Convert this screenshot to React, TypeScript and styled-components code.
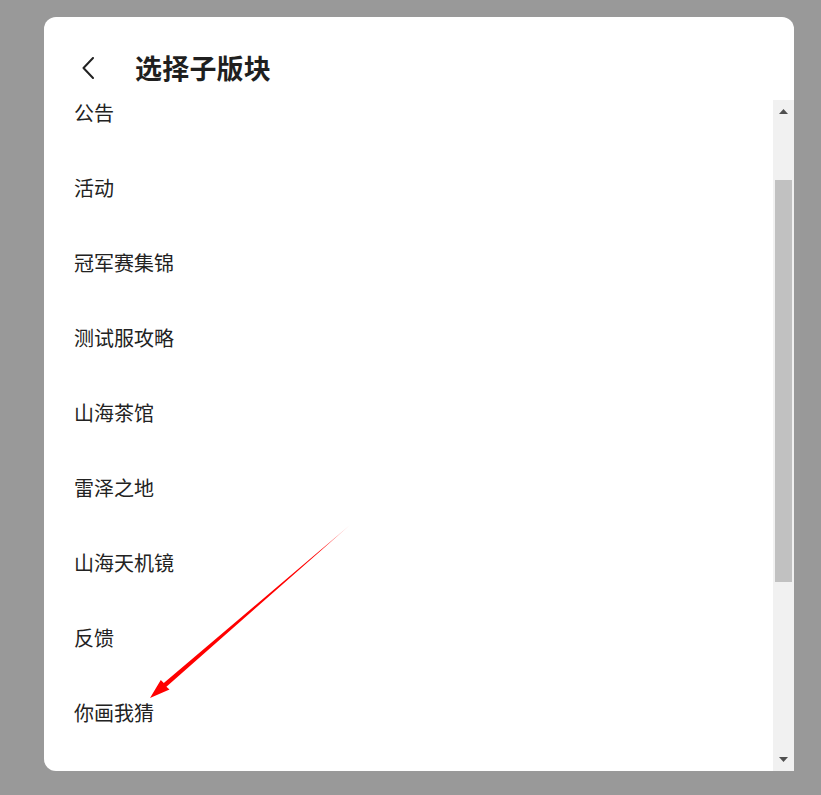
import React from "react";
import styled, { createGlobalStyle } from "styled-components";

const GlobalStyle = createGlobalStyle`
  html, body {
    margin: 0;
    padding: 0;
    background: #999999;
  }
  body {
    font-family: "Noto Sans CJK SC", "Noto Sans", sans-serif;
  }
`;

const Page = styled.div`
  position: relative;
  width: 821px;
  height: 795px;
  box-sizing: border-box;
  padding: 17px 27px 24px 44px;
  background: #999999;
  overflow: hidden;
`;

const Modal = styled.div`
  width: 750px;
  height: 754px;
  background: #ffffff;
  border-radius: 12px 12px 0 12px;
  overflow: hidden;
  display: flex;
  flex-direction: column;
`;

const Header = styled.div`
  height: 83px;
  box-sizing: border-box;
  padding: 33px 0 0 38px;
  display: flex;
  align-items: flex-start;
  gap: 41px;
  flex-shrink: 0;
`;

const BackButton = styled.div`
  width: 12px;
  height: 36px;
  display: flex;
  align-items: center;
  color: #222222;
`;

const Title = styled.h1`
  margin: 0;
  font-size: 27px;
  line-height: 36px;
  font-weight: 700;
  color: #1f1f1f;
  letter-spacing: 0.2px;
`;

const Body = styled.div`
  flex: 1;
  display: flex;
  min-height: 0;
`;

const ListViewport = styled.div`
  flex: 1;
  min-width: 0;
`;

const List = styled.ul`
  list-style: none;
  margin: 0;
  padding: 0;
`;

const Item = styled.li`
  padding: 25.5px 0 25.5px 30px;
  font-size: 20px;
  line-height: 24px;
  color: #222222;

  &:first-child {
    padding-top: 0.5px;
  }
`;

const ScrollBar = styled.div`
  width: 21px;
  background: #f1f1f1;
  display: flex;
  flex-direction: column;
  flex-shrink: 0;
`;

const ArrowButton = styled.div`
  height: 23px;
  display: flex;
  align-items: center;
  justify-content: center;
  flex-shrink: 0;
`;

const Track = styled.div`
  flex: 1;
  padding-top: 57px;
`;

const Thumb = styled.div`
  height: 402px;
  margin: 0 2px;
  background: #c1c1c1;
`;

const Annotation = styled.svg`
  position: absolute;
  left: 0;
  top: 0;
  pointer-events: none;
`;

const items = [
  "公告",
  "活动",
  "冠军赛集锦",
  "测试服攻略",
  "山海茶馆",
  "雷泽之地",
  "山海天机镜",
  "反馈",
  "你画我猜",
];

export default function App() {
  return (
    <>
      <GlobalStyle />
      <Page>
        <Modal>
          <Header>
            <BackButton>
              <svg width="12" height="22" viewBox="0 0 12 22">
                <polyline
                  points="11,1 1.5,11 11,21"
                  fill="none"
                  stroke="currentColor"
                  strokeWidth="2"
                  strokeLinecap="round"
                  strokeLinejoin="round"
                />
              </svg>
            </BackButton>
            <Title>选择子版块</Title>
          </Header>
          <Body>
            <ListViewport>
              <List>
                {items.map((t) => (
                  <Item key={t}>{t}</Item>
                ))}
              </List>
            </ListViewport>
            <ScrollBar>
              <ArrowButton>
                <svg width="9" height="5" viewBox="0 0 9 5">
                  <polygon points="4.5,0 9,5 0,5" fill="#505050" />
                </svg>
              </ArrowButton>
              <Track>
                <Thumb />
              </Track>
              <ArrowButton>
                <svg width="9" height="5" viewBox="0 0 9 5">
                  <polygon points="0,0 9,0 4.5,5" fill="#505050" />
                </svg>
              </ArrowButton>
            </ScrollBar>
          </Body>
        </Modal>
        <Annotation width="821" height="795" viewBox="0 0 821 795">
          <defs>
            <linearGradient id="fade" x1="350" y1="525" x2="150" y2="698" gradientUnits="userSpaceOnUse">
              <stop offset="0" stopColor="#ff0000" stopOpacity="0.3" />
              <stop offset="0.15" stopColor="#ff0000" stopOpacity="1" />
              <stop offset="1" stopColor="#ff0000" stopOpacity="1" />
            </linearGradient>
          </defs>
          <polygon
            points="150,698 169.5,689.6 166.4,686.8 350,525 163.8,683.0 160.8,680.0"
            fill="url(#fade)"
          />
        </Annotation>
      </Page>
    </>
  );
}
